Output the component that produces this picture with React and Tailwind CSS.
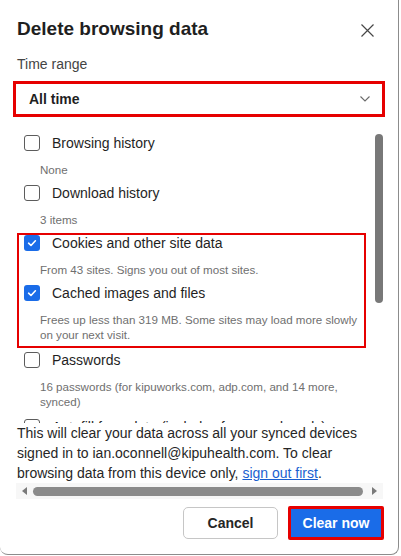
import React from 'react';

const Checkbox = ({ checked }) =>
  checked ? (
    <span className="flex h-[16px] w-[16px] shrink-0 items-center justify-center rounded-[3px] bg-[#1a6ce8]">
      <svg width="12" height="12" viewBox="0 0 12 12" fill="none">
        <path d="M2.6 6.2 L5 8.5 L9.4 3.8" stroke="white" strokeWidth="1.6" strokeLinecap="round" strokeLinejoin="round" />
      </svg>
    </span>
  ) : (
    <span className="h-[16px] w-[16px] shrink-0 rounded-[3px] border border-[#5c5c5c] bg-white" />
  );

const Item = ({ label, sub, checked, tall }) => (
  <div className={tall ? 'pb-[6px]' : 'pb-[4px]'}>
    <div className="flex h-[24px] items-center gap-[12px] pl-[7px]">
      <Checkbox checked={checked} />
      <span className="whitespace-nowrap text-[14px] text-[#1f1f1f]">{label}</span>
    </div>
    <p className="mt-[7px] pl-[23px] text-[11.6px] leading-[15px] text-[#6f6f6f]">{sub}</p>
  </div>
);

const App = () => {
  return (
    <div className="h-[556px] w-[401px] overflow-hidden bg-white font-['Liberation_Sans',Arial,sans-serif]">
      <div className="h-[555px] w-[399px] rounded-b-[8px] border-r border-b border-[#8c8c8c] bg-white pt-[17px] pl-[17px] pr-[15px]">
        {/* header */}
        <div className="flex items-center justify-between">
          <h1 className="text-[19px] font-bold leading-6 text-[#1f1f1f]">Delete browsing data</h1>
          <button className="mr-[9px] mt-[2px]">
            <svg width="13" height="13" viewBox="0 0 13 13" fill="none">
              <path d="M0.5 0.5 L12.5 12.5 M12.5 0.5 L0.5 12.5" stroke="#474747" strokeWidth="1.2" />
            </svg>
          </button>
        </div>

        <p className="mt-[13px] text-[14px] leading-5 text-[#444]">Time range</p>

        <div className="-ml-[4px] -mr-[2px] mt-[7px] flex h-[36px] items-center justify-between border-[3px] border-[#e60000] pl-[13px] pr-[12px]">
          <span className="text-[14px] font-bold text-[#1f1f1f]">All time</span>
          <svg width="10" height="6" viewBox="0 0 10 6" fill="none">
            <path d="M0.5 0.5 L5 5 L9.5 0.5" stroke="#6a6a6a" strokeWidth="1.1" />
          </svg>
        </div>

        {/* list */}
        <div className="mt-[9px] flex h-[297px] overflow-hidden">
          <div className="flex-1 pt-[5px]">
            <Item label="Browsing history" sub="None" />
            <Item label="Download history" sub="3 items" />
            <div className="relative">
              <Item checked label="Cookies and other site data" sub="From 43 sites. Signs you out of most sites." />
              <Item
                checked
                tall
                label="Cached images and files"
                sub={
                  <>
                    Frees up less than 319 MB. Some sites may load more slowly
                    <br />
                    on your next visit.
                  </>
                }
              />
              <div className="absolute top-[2px] left-0 h-[115px] w-[349px] border-2 border-[#e60000]" />
            </div>
            <Item
              tall
              label="Passwords"
              sub={
                <>
                  16 passwords (for kipuworks.com, adp.com, and 14 more,
                  <br />
                  synced)
                </>
              }
            />
            <Item label="Autofill form data (includes forms and cards)" sub="" />
          </div>
          <div className="w-[8px] pt-[8px]">
            <div className="h-[169px] w-[8px] rounded-full bg-[#787878]" />
          </div>
        </div>

        {/* footer text */}
        <p className="text-[14px] leading-5 text-[#262626]">
          This will clear your data across all your synced devices
          <br />
          signed in to ian.oconnell@kipuhealth.com. To clear
          <br />
          browsing data from this device only,{' '}
          <a className="text-[#1a5fd0] underline">sign out first</a>.
        </p>

        {/* horizontal scrollbar */}
        <div className="-ml-px flex h-[16px] items-center bg-[#f7f7f7] px-[6px]">
          <span className="h-0 w-0 border-y-[4px] border-r-[5px] border-y-transparent border-r-[#7a7a7a]" />
          <span className="ml-[6px] mr-[9px] h-[9px] flex-1 rounded-full bg-[#8b8b8b]" />
          <span className="h-0 w-0 border-y-[4px] border-l-[5px] border-y-transparent border-l-[#7a7a7a]" />
        </div>

        {/* buttons */}
        <div className="-mr-px mt-[7px] flex items-start justify-end gap-[10px]">
          <button className="mt-[1px] h-[32px] w-[95px] rounded-[5px] border border-[#c6c6c6] bg-white text-[14px] font-bold text-[#262626]">
            Cancel
          </button>
          <button className="h-[34px] w-[96px] rounded-[2px] border-[3px] border-[#e60000] bg-[#1a6ce8] text-[14px] font-bold text-white">
            Clear now
          </button>
        </div>
      </div>
    </div>
  );
};

export default App;
